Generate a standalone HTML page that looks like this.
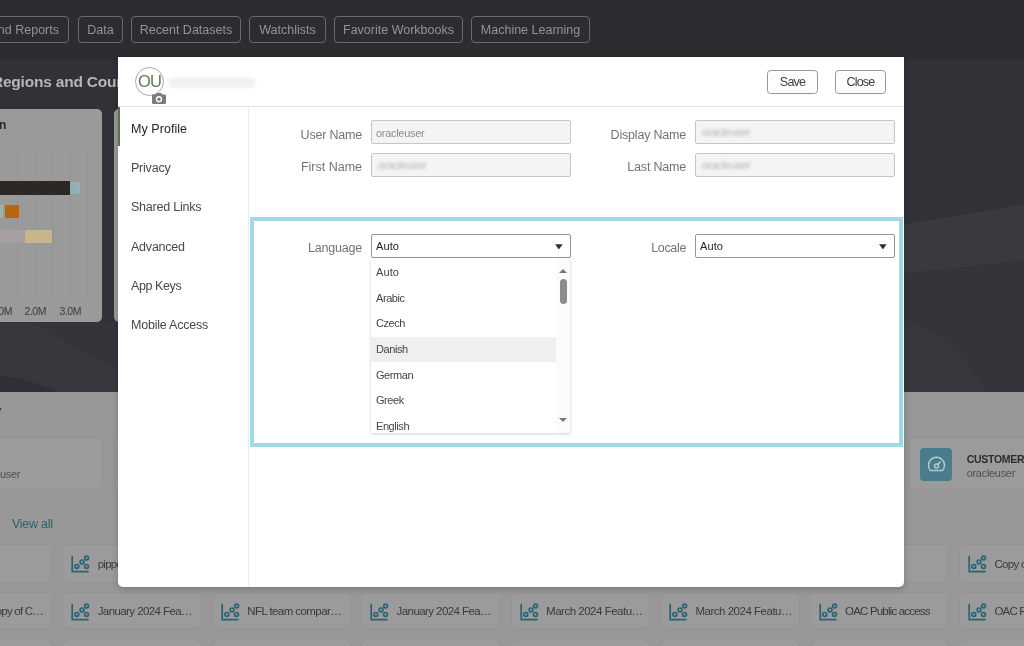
<!DOCTYPE html>
<html lang="en">
<head>
<meta charset="utf-8">
<title>My Profile</title>
<style>
*{box-sizing:border-box;margin:0;padding:0}
html,body{width:1024px;height:646px;overflow:hidden}
body{position:relative;will-change:transform;background:#989898;font-family:"Liberation Sans",sans-serif;font-size:13px;color:#333}
.abs{position:absolute}
.t{position:absolute;white-space:nowrap;line-height:1}
/* top bar */
#topbar{left:0;top:0;width:1024px;height:59.6px;background:#2c2d31}
.pill{position:absolute;top:16px;height:27px;border:1px solid #696a6d;border-radius:4px;color:#949494;font-size:12.5px;line-height:27.4px;text-align:center;white-space:nowrap}
/* hero */
#hero{left:0;top:59.6px;width:1024px;height:332.2px;background:#34353a;overflow:hidden}
/* page lower */
.card{position:absolute;background:#9b9b9b;border:1px solid #929292;border-radius:6px}
.wb{position:absolute;height:38px;width:139.6px;background:#9b9b9b;border:1px solid #939393;border-radius:6px}
.wb svg{position:absolute;left:7px;top:8.8px}
.wb span{position:absolute;left:34.5px;top:13.6px;font-size:11.5px;letter-spacing:-.5px;line-height:1;color:#3a3a3c;white-space:nowrap}
/* modal */
#modal{left:118px;top:57px;width:786px;height:530px;background:#fff;border-radius:0 0 5px 5px;box-shadow:0 2px 6px rgba(0,0,0,.22)}
.btn{position:absolute;top:13px;height:24px;border:1px solid #979797;border-radius:3.5px;background:#fdfdfd;font-size:12.5px;letter-spacing:-.8px;line-height:23.2px;text-align:center;color:#404040}
.nav{position:absolute;left:13px;font-size:12.5px;letter-spacing:-.22px;line-height:1;color:#484848;white-space:nowrap}
.lbl{position:absolute;font-size:12.5px;letter-spacing:-.2px;line-height:1;color:#737373;white-space:nowrap;text-align:right}
.inp{position:absolute;height:23.8px;background:#f5f4f2;border:1px solid #c6c5c3;border-radius:2px}
.blr{position:absolute;left:6px;top:6px;font-size:11px;line-height:1;letter-spacing:-.3px;color:#b0b0b8;filter:blur(1.4px);white-space:nowrap}
.sel{position:absolute;height:24px;background:#fff;border:1px solid #969696;border-radius:2px}
.sel span{position:absolute;left:4px;top:6px;font-size:11px;letter-spacing:.1px;line-height:1;color:#222}
.sel svg{position:absolute;left:182.6px;top:9.4px}
.opt{position:absolute;left:4.8px;font-size:11px;letter-spacing:-.42px;line-height:1;color:#444;white-space:nowrap}
</style>
</head>
<body>
<!-- ===== background page (dimmed by overlay) ===== -->
<div id="topbar" class="abs">
  <div class="pill" style="left:-40px;width:109px;text-align:right;padding-right:9px">and Reports</div>
  <div class="pill" style="left:78px;width:45px">Data</div>
  <div class="pill" style="left:131px;width:110px">Recent Datasets</div>
  <div class="pill" style="left:249px;width:77px">Watchlists</div>
  <div class="pill" style="left:334px;width:129px">Favorite Workbooks</div>
  <div class="pill" style="left:471px;width:119px">Machine Learning</div>
</div>

<div id="hero" class="abs">
  <svg class="abs" style="left:0;top:-1.6px" width="1024" height="334" viewBox="0 0 1024 334">
    <rect width="1024" height="334" fill="#313237"/>
    <path d="M0 264 L118 264 L118 334 L0 334 Z" fill="#34353a"/>
    <path d="M0 264 L30 264 C 60 280, 95 300, 118 312 L118 334 L60 334 C 40 326, 20 320, 0 318 Z" fill="#37383d"/>
    <path d="M0 318 C 20 320, 40 326, 60 334 L0 334 Z" fill="#2f3035"/>
    <path d="M904 166 C 945 160, 985 153, 1024 146 L1024 202 C 985 207, 945 212, 904 216 Z" fill="#393a3f"/>
    <path d="M904 216 C 945 212, 985 207, 1024 202 L1024 334 L904 334 Z" fill="#34353a"/>
    <path d="M904 262 C 935 268, 965 295, 985 334 L904 334 Z" fill="#37383d"/>
  </svg>
  <div class="t" style="left:-8.1px;top:14px;font-size:15.5px;letter-spacing:-.2px;font-weight:bold;color:#b6b6b6">Regions and Countries</div>
</div>

<!-- chart card -->
<div class="abs" style="left:-10px;top:109.3px;width:112.3px;height:212.7px;background:#9a9a9a;border-radius:5px;overflow:hidden">
  <div class="t" style="left:9px;top:119px;font-size:0"></div>
</div>
<div class="abs" style="left:114.4px;top:109.3px;width:60px;height:212.7px;background:#9a9a9a;border-radius:5px"></div>
<div class="t" style="left:-1px;top:118.5px;font-size:12px;font-weight:bold;color:#2a2a2a">n</div>
<!-- gridlines -->
<div class="abs" style="left:17.3px;top:152px;width:1px;height:144.5px;background:#949494"></div>
<div class="abs" style="left:35.3px;top:152px;width:1px;height:144.5px;background:#949494"></div>
<div class="abs" style="left:52.3px;top:152px;width:1px;height:144.5px;background:#949494"></div>
<div class="abs" style="left:70.3px;top:152px;width:1px;height:144.5px;background:#949494"></div>
<div class="abs" style="left:87.3px;top:152px;width:1px;height:144.5px;background:#949494"></div>
<!-- bars -->
<div class="abs" style="left:0;top:181.3px;width:70px;height:13.4px;background:#2e2824"></div>
<div class="abs" style="left:70px;top:182px;width:10px;height:12px;background:linear-gradient(90deg,#8aadb9,#93b0b9)"></div>
<div class="abs" style="left:0;top:204.8px;width:3.3px;height:13.6px;background:#9db4a0"></div>
<div class="abs" style="left:5.2px;top:204.8px;width:14px;height:13.6px;background:#b5660f"></div>
<div class="abs" style="left:0;top:229.5px;width:24.7px;height:13.1px;background:#a6a1a0"></div>
<div class="abs" style="left:24.7px;top:229.5px;width:26.9px;height:13.1px;background:#c8b58c"></div>
<div class="t" style="left:-9.5px;top:306px;font-size:10.5px;letter-spacing:-.45px;color:#3c3c3c">1.0M</div>
<div class="t" style="left:24.5px;top:306px;font-size:10.5px;letter-spacing:-.45px;color:#3c3c3c">2.0M</div>
<div class="t" style="left:59.5px;top:306px;font-size:10.5px;letter-spacing:-.45px;color:#3c3c3c">3.0M</div>

<!-- lower section -->
<div class="t" style="left:-7.3px;top:403px;font-size:15.5px;font-weight:bold;color:#2b2b2b">y</div>
<div class="card" style="left:-10px;top:437.4px;width:112.6px;height:52.6px"></div>
<div class="card" style="left:113.6px;top:437.4px;width:140px;height:52.6px"></div>
<div class="t" style="left:-28.2px;top:468.6px;font-size:11px;letter-spacing:-.3px;color:#505050">oracleuser</div>
<div class="card" style="left:908.5px;top:437.4px;width:140px;height:52.6px"></div>
<div class="abs" style="left:919.7px;top:448.2px;width:32.6px;height:32.6px;border-radius:4px;background:#4a7d8c">
  <svg style="position:absolute;left:0;top:.6px" width="33" height="33" viewBox="0 0 33 33" fill="none" stroke="#b4cad1" stroke-width="1.5">
    <path d="M10.5 21.5a8 8 0 1 1 12 0z"/><circle cx="16.5" cy="17" r="2"/><path d="M17.8 15.6l2.7-3.2"/>
  </svg>
</div>
<div class="t" style="left:966.7px;top:453.5px;font-size:10.5px;letter-spacing:-.3px;font-weight:bold;color:#2c2c2c">CUSTOMER</div>
<div class="t" style="left:966.7px;top:468px;font-size:11px;letter-spacing:-.3px;color:#505050">oracleuser</div>
<div class="t" style="left:12px;top:518px;font-size:12.5px;letter-spacing:-.26px;color:#2a6175">View all</div>

<!-- workbook cards -->
<div id="grid">
<div class="wb" style="left:-86.2px;top:544px;height:38.6px"></div>
<div class="wb" style="left:-86.2px;top:591.8px;height:37.4px"><span style="left:auto;right:9.5px;letter-spacing:-0.8px">Copy of C…</span></div>
<div class="wb" style="left:-86.2px;top:638.6px;height:38px"></div>
<div class="wb" style="left:62.2px;top:544px;height:38.6px"><svg width="20" height="20" viewBox="0 0 20 20" fill="none" stroke="#2a6374" stroke-width="1.7"><path d="M2.2 1.8V17.6H18.6"/><circle cx="6.8" cy="12.4" r="1.9"/><circle cx="12" cy="7.9" r="1.9"/><circle cx="16.6" cy="4" r="1.9"/><circle cx="16.5" cy="12.4" r="1.9"/></svg><span style="letter-spacing:-0.75px">pippo</span></div>
<div class="wb" style="left:62.2px;top:591.8px;height:37.4px"><svg width="20" height="20" viewBox="0 0 20 20" fill="none" stroke="#2a6374" stroke-width="1.7"><path d="M2.2 1.8V17.6H18.6"/><circle cx="6.8" cy="12.4" r="1.9"/><circle cx="12" cy="7.9" r="1.9"/><circle cx="16.6" cy="4" r="1.9"/><circle cx="16.5" cy="12.4" r="1.9"/></svg><span style="letter-spacing:-0.58px">January 2024 Fea…</span></div>
<div class="wb" style="left:62.2px;top:638.6px;height:38px"></div>
<div class="wb" style="left:211.7px;top:591.8px;height:37.4px"><svg width="20" height="20" viewBox="0 0 20 20" fill="none" stroke="#2a6374" stroke-width="1.7"><path d="M2.2 1.8V17.6H18.6"/><circle cx="6.8" cy="12.4" r="1.9"/><circle cx="12" cy="7.9" r="1.9"/><circle cx="16.6" cy="4" r="1.9"/><circle cx="16.5" cy="12.4" r="1.9"/></svg><span style="letter-spacing:-0.57px">NFL team compar…</span></div>
<div class="wb" style="left:211.7px;top:638.6px;height:38px"></div>
<div class="wb" style="left:361.1px;top:591.8px;height:37.4px"><svg width="20" height="20" viewBox="0 0 20 20" fill="none" stroke="#2a6374" stroke-width="1.7"><path d="M2.2 1.8V17.6H18.6"/><circle cx="6.8" cy="12.4" r="1.9"/><circle cx="12" cy="7.9" r="1.9"/><circle cx="16.6" cy="4" r="1.9"/><circle cx="16.5" cy="12.4" r="1.9"/></svg><span style="letter-spacing:-0.58px">January 2024 Fea…</span></div>
<div class="wb" style="left:361.1px;top:638.6px;height:38px"></div>
<div class="wb" style="left:510.6px;top:591.8px;height:37.4px"><svg width="20" height="20" viewBox="0 0 20 20" fill="none" stroke="#2a6374" stroke-width="1.7"><path d="M2.2 1.8V17.6H18.6"/><circle cx="6.8" cy="12.4" r="1.9"/><circle cx="12" cy="7.9" r="1.9"/><circle cx="16.6" cy="4" r="1.9"/><circle cx="16.5" cy="12.4" r="1.9"/></svg><span style="letter-spacing:-0.49px">March 2024 Featu…</span></div>
<div class="wb" style="left:510.6px;top:638.6px;height:38px"></div>
<div class="wb" style="left:660.0px;top:591.8px;height:37.4px"><svg width="20" height="20" viewBox="0 0 20 20" fill="none" stroke="#2a6374" stroke-width="1.7"><path d="M2.2 1.8V17.6H18.6"/><circle cx="6.8" cy="12.4" r="1.9"/><circle cx="12" cy="7.9" r="1.9"/><circle cx="16.6" cy="4" r="1.9"/><circle cx="16.5" cy="12.4" r="1.9"/></svg><span style="letter-spacing:-0.49px">March 2024 Featu…</span></div>
<div class="wb" style="left:660.0px;top:638.6px;height:38px"></div>
<div class="wb" style="left:809.5px;top:544px;height:38.6px"></div>
<div class="wb" style="left:809.5px;top:591.8px;height:37.4px"><svg width="20" height="20" viewBox="0 0 20 20" fill="none" stroke="#2a6374" stroke-width="1.7"><path d="M2.2 1.8V17.6H18.6"/><circle cx="6.8" cy="12.4" r="1.9"/><circle cx="12" cy="7.9" r="1.9"/><circle cx="16.6" cy="4" r="1.9"/><circle cx="16.5" cy="12.4" r="1.9"/></svg><span style="letter-spacing:-0.81px">OAC Public access</span></div>
<div class="wb" style="left:809.5px;top:638.6px;height:38px"></div>
<div class="wb" style="left:958.9px;top:544px;height:38.6px"><svg width="20" height="20" viewBox="0 0 20 20" fill="none" stroke="#2a6374" stroke-width="1.7"><path d="M2.2 1.8V17.6H18.6"/><circle cx="6.8" cy="12.4" r="1.9"/><circle cx="12" cy="7.9" r="1.9"/><circle cx="16.6" cy="4" r="1.9"/><circle cx="16.5" cy="12.4" r="1.9"/></svg><span style="letter-spacing:-0.7px">Copy of Sales</span></div>
<div class="wb" style="left:958.9px;top:591.8px;height:37.4px"><svg width="20" height="20" viewBox="0 0 20 20" fill="none" stroke="#2a6374" stroke-width="1.7"><path d="M2.2 1.8V17.6H18.6"/><circle cx="6.8" cy="12.4" r="1.9"/><circle cx="12" cy="7.9" r="1.9"/><circle cx="16.6" cy="4" r="1.9"/><circle cx="16.5" cy="12.4" r="1.9"/></svg><span style="letter-spacing:-0.81px">OAC Public</span></div>
<div class="wb" style="left:958.9px;top:638.6px;height:38px"></div>
</div><!--/grid-->

<!-- ===== modal ===== -->
<div id="modal" class="abs">
  <!-- header -->
  <div class="abs" style="left:0;top:49px;width:786px;height:1px;background:#e2e2e2"></div>
  <div class="abs" style="left:17px;top:10px;width:29px;height:29px;border:1px solid #a9a9a9;border-radius:50%"></div>
  <div class="t" style="left:17px;top:16px;width:29px;text-align:center;font-size:16.5px;letter-spacing:-.9px;color:#5e7b50">OU</div>
  <svg class="abs" style="left:34px;top:35px" width="15" height="12" viewBox="0 0 15 12"><path d="M1.2 2.6h2.6l1-1.6h4.4l1 1.6h2.6q1.2 0 1.2 1.2v7q0 1.2-1.2 1.2H1.2Q0 12 0 10.800V3.800Q0 2.600 1.200 2.600Z" fill="#7b7b7b"/><circle cx="7" cy="7.200" r="3.100" fill="#fff"/><circle cx="7" cy="7.200" r="1.700" fill="#7b7b7b"/></svg>
  <div class="abs" style="left:51px;top:20px;width:86px;height:11px;background:#f2f2f1;border-radius:2px;filter:blur(1.6px)"></div>
  <div class="btn" style="left:649px;width:51px">Save</div>
  <div class="btn" style="left:717px;width:51px">Close</div>
  <!-- sidebar -->
  <div class="abs" style="left:130px;top:50px;width:1px;height:480px;background:#ebebeb"></div>
  <div class="abs" style="left:0;top:50px;width:2.3px;height:39px;background:#587540"></div>
  <div class="nav" style="top:65.5px;color:#222;letter-spacing:.05px">My Profile</div>
  <div class="nav" style="top:105px">Privacy</div>
  <div class="nav" style="top:144px">Shared Links</div>
  <div class="nav" style="top:183.5px">Advanced</div>
  <div class="nav" style="top:223px;letter-spacing:-.4px">App Keys</div>
  <div class="nav" style="top:262px">Mobile Access</div>
  <!-- form row 1 -->
  <div class="lbl" style="left:144px;width:100px;top:71.6px">User Name</div>
  <div class="inp" style="left:253px;top:63.2px;width:200px"><span class="t" style="left:4px;top:6.7px;font-size:11px;letter-spacing:-.3px;color:#8d8d8d">oracleuser</span></div>
  <div class="lbl" style="left:468px;width:100px;top:71.6px">Display Name</div>
  <div class="inp" style="left:577px;top:63.2px;width:200px"><span class="blr">oracleuser</span></div>
  <div class="lbl" style="left:144px;width:100px;top:104px;letter-spacing:0">First Name</div>
  <div class="inp" style="left:253px;top:96px;width:200px"><span class="blr">oracleuser</span></div>
  <div class="lbl" style="left:468px;width:100px;top:104px">Last Name</div>
  <div class="inp" style="left:577px;top:96px;width:200px"><span class="blr">oracleuser</span></div>
  <!-- highlight box -->
  <div class="abs" style="left:132.2px;top:159.7px;width:653.2px;height:230.6px;border:4.4px solid #a0d9e4"></div>
  <div class="lbl" style="left:144px;width:100px;top:185px">Language</div>
  <div class="sel" style="left:253px;top:177px;width:200px"><span>Auto</span><svg width="8" height="6" viewBox="0 0 8 6"><path d="M.1 .2H7.6L3.85 5.4Z" fill="#2e2e2e"/></svg></div>
  <div class="lbl" style="left:468px;width:100px;top:185px;letter-spacing:-.35px">Locale</div>
  <div class="sel" style="left:577px;top:177px;width:200px"><span>Auto</span><svg width="8" height="6" viewBox="0 0 8 6"><path d="M.1 .2H7.6L3.85 5.4Z" fill="#2e2e2e"/></svg></div>
  <!-- dropdown -->
  <div class="abs" style="left:253.2px;top:201px;width:198.4px;height:174.6px;background:#fff;box-shadow:0 1px 3px rgba(0,0,0,.2);overflow:hidden">
    <div class="abs" style="left:0;top:79px;width:184.5px;height:24.8px;background:#f0efed"></div>
    <div class="opt" style="top:9px;letter-spacing:.1px">Auto</div>
    <div class="opt" style="top:35px">Arabic</div>
    <div class="opt" style="top:60px">Czech</div>
    <div class="opt" style="top:86px">Danish</div>
    <div class="opt" style="top:111.6px">German</div>
    <div class="opt" style="top:137.3px">Greek</div>
    <div class="opt" style="top:163px">English</div>
    <div class="abs" style="left:184.5px;top:0;width:14px;height:175px;background:#fbfbfb"></div>
    <div class="abs" style="left:188.5px;top:21.4px;width:7.7px;height:24.6px;border-radius:4px;background:#8c8c8c"></div>
    <div class="abs" style="left:188px;top:10.5px;width:0;height:0;border-left:4.2px solid transparent;border-right:4.2px solid transparent;border-bottom:4.3px solid #777"></div>
    <div class="abs" style="left:188px;top:159.5px;width:0;height:0;border-left:4.2px solid transparent;border-right:4.2px solid transparent;border-top:4.3px solid #777"></div>
  </div>
</div>
</body>
</html>
